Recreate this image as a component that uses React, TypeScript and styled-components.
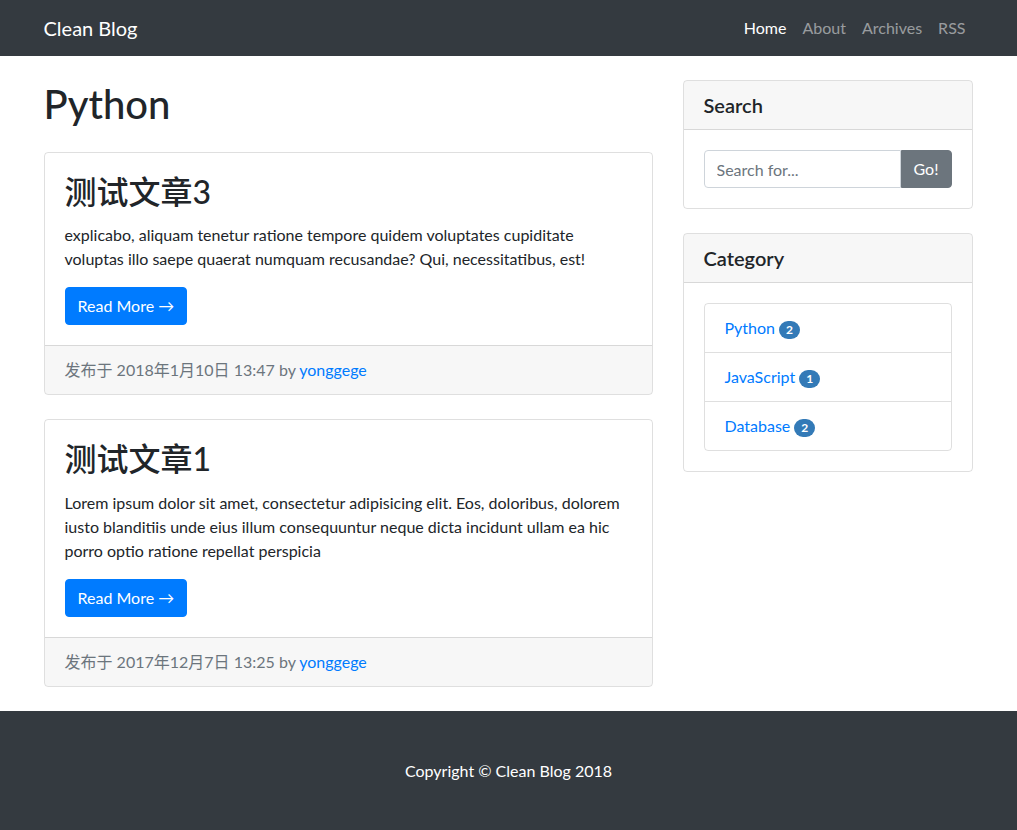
import styled, { createGlobalStyle } from 'styled-components';

const GlobalStyle = createGlobalStyle`
	* {
		box-sizing: border-box;
	}
	body {
		margin: 0;
		font-family: Lato, "Noto Sans CJK SC", sans-serif;
		font-size: 16px;
		line-height: 1.5;
		color: #212529;
		background: #fff;
	}
	a {
		color: #007bff;
		text-decoration: none;
	}
`;

interface Post {
	title: string;
	excerpt: string;
	date: string;
	author: string;
}

interface Category {
	name: string;
	count: number;
}

const posts: Post[] = [
	{
		title: '测试文章3',
		excerpt:
			'explicabo, aliquam tenetur ratione tempore quidem voluptates cupiditate voluptas illo saepe quaerat numquam recusandae? Qui, necessitatibus, est!',
		date: '2018年1月10日 13:47',
		author: 'yonggege',
	},
	{
		title: '测试文章1',
		excerpt:
			'Lorem ipsum dolor sit amet, consectetur adipisicing elit. Eos, doloribus, dolorem iusto blanditiis unde eius illum consequuntur neque dicta incidunt ullam ea hic porro optio ratione repellat perspicia',
		date: '2017年12月7日 13:25',
		author: 'yonggege',
	},
];

const categories: Category[] = [
	{ name: 'Python', count: 2 },
	{ name: 'JavaScript', count: 1 },
	{ name: 'Database', count: 2 },
];

const Navbar = styled.nav`
	background: #343a40;
	height: 56px;
`;

const Container = styled.div`
	width: 960px;
	margin: 0 auto;
	padding: 0 15px;
`;

const NavInner = styled(Container)`
	display: flex;
	align-items: center;
	justify-content: space-between;
	height: 100%;
`;

const Brand = styled.a`
	color: #fff;
	font-size: 20px;
	line-height: 30px;
`;

const NavLinks = styled.div`
	display: flex;
`;

const NavLink = styled.a<{ $active?: boolean }>`
	padding: 8px 8px;
	color: ${(p) => (p.$active ? '#fff' : 'rgba(255,255,255,.5)')};
`;

const Row = styled.div`
	display: flex;
	gap: 30px;
`;

const MainCol = styled.div`
	width: 609px;
`;

const SideCol = styled.div`
	width: 290px;
`;

const PageTitle = styled.h1`
	font-size: 40px;
	font-weight: 500;
	line-height: 1.2;
	margin: 24px 0;
`;

const Card = styled.div`
	border: 1px solid rgba(0, 0, 0, 0.125);
	border-radius: 4px;
	margin-bottom: 24px;
	overflow: hidden;
`;

const SideCard = styled(Card)`
	margin-top: 24px;
	margin-bottom: 0;
`;

const CardBody = styled.div`
	padding: 20px;
`;

const CardTitle = styled.h2`
	font-size: 32px;
	font-weight: 500;
	line-height: 1.2;
	margin: 0 0 12px;
`;

const Excerpt = styled.p`
	margin: 0 0 16px;
`;

const Button = styled.a<{ $variant?: 'primary' | 'secondary' }>`
	display: inline-block;
	padding: 6px 12px;
	font-size: 16px;
	line-height: 24px;
	color: #fff;
	background: ${(p) => (p.$variant === 'secondary' ? '#6c757d' : '#007bff')};
	border: 1px solid ${(p) => (p.$variant === 'secondary' ? '#6c757d' : '#007bff')};
	border-radius: 4px;
`;

const CardFooter = styled.div`
	padding: 12px 20px;
	background: rgba(0, 0, 0, 0.03);
	border-top: 1px solid rgba(0, 0, 0, 0.125);
	color: #6c757d;
`;

const CardHeader = styled.h5`
	margin: 0;
	padding: 12px 20px;
	font-size: 20px;
	font-weight: 600;
	line-height: 1.2;
	background: rgba(0, 0, 0, 0.03);
	border-bottom: 1px solid rgba(0, 0, 0, 0.125);
`;

const InputGroup = styled.div`
	display: flex;
`;

const SearchInput = styled.input`
	flex: 1;
	min-width: 0;
	height: 38px;
	padding: 6px 12px;
	font: inherit;
	color: #495057;
	border: 1px solid #ced4da;
	border-radius: 4px 0 0 4px;
	&::placeholder {
		color: #6c757d;
	}
`;

const GoButton = styled(Button)`
	border-radius: 0 4px 4px 0;
`;

const ListGroup = styled.ul`
	list-style: none;
	margin: 0;
	padding: 0;
	border: 1px solid rgba(0, 0, 0, 0.125);
	border-radius: 4px;
`;

const ListItem = styled.li`
	padding: 12px 20px;
	& + & {
		border-top: 1px solid rgba(0, 0, 0, 0.125);
	}
`;

const Badge = styled.span`
	display: inline-block;
	min-width: 21px;
	margin-left: 4px;
	padding: 3px 7px;
	font-size: 12px;
	font-weight: 700;
	line-height: 1;
	color: #fff;
	text-align: center;
	vertical-align: middle;
	background: #337ab7;
	border-radius: 10px;
`;

const Footer = styled.footer`
	padding: 48px 0;
	background: #343a40;
	color: #fff;
	text-align: center;
`;

export default function App() {
	return (
		<>
			<GlobalStyle />
			<Navbar>
				<NavInner>
					<Brand href="#">Clean Blog</Brand>
					<NavLinks>
						<NavLink $active href="#">Home</NavLink>
						<NavLink href="#">About</NavLink>
						<NavLink href="#">Archives</NavLink>
						<NavLink href="#">RSS</NavLink>
					</NavLinks>
				</NavInner>
			</Navbar>

			<Container>
				<Row>
					<MainCol>
						<PageTitle>Python</PageTitle>
						{posts.map((post) => (
							<Card key={post.title}>
								<CardBody>
									<CardTitle>{post.title}</CardTitle>
									<Excerpt>{post.excerpt}</Excerpt>
									<Button href="#">Read More &rarr;</Button>
								</CardBody>
								<CardFooter>
									发布于 {post.date} by <a href="#">{post.author}</a>
								</CardFooter>
							</Card>
						))}
					</MainCol>

					<SideCol>
						<SideCard>
							<CardHeader>Search</CardHeader>
							<CardBody>
								<InputGroup>
									<SearchInput placeholder="Search for..." />
									<GoButton $variant="secondary" href="#">Go!</GoButton>
								</InputGroup>
							</CardBody>
						</SideCard>
						<SideCard>
							<CardHeader>Category</CardHeader>
							<CardBody>
								<ListGroup>
									{categories.map((c) => (
										<ListItem key={c.name}>
											<a href="#">{c.name}</a>
											<Badge>{c.count}</Badge>
										</ListItem>
									))}
								</ListGroup>
							</CardBody>
						</SideCard>
					</SideCol>
				</Row>
			</Container>

			<Footer>Copyright &copy; Clean Blog 2018</Footer>
		</>
	);
}
